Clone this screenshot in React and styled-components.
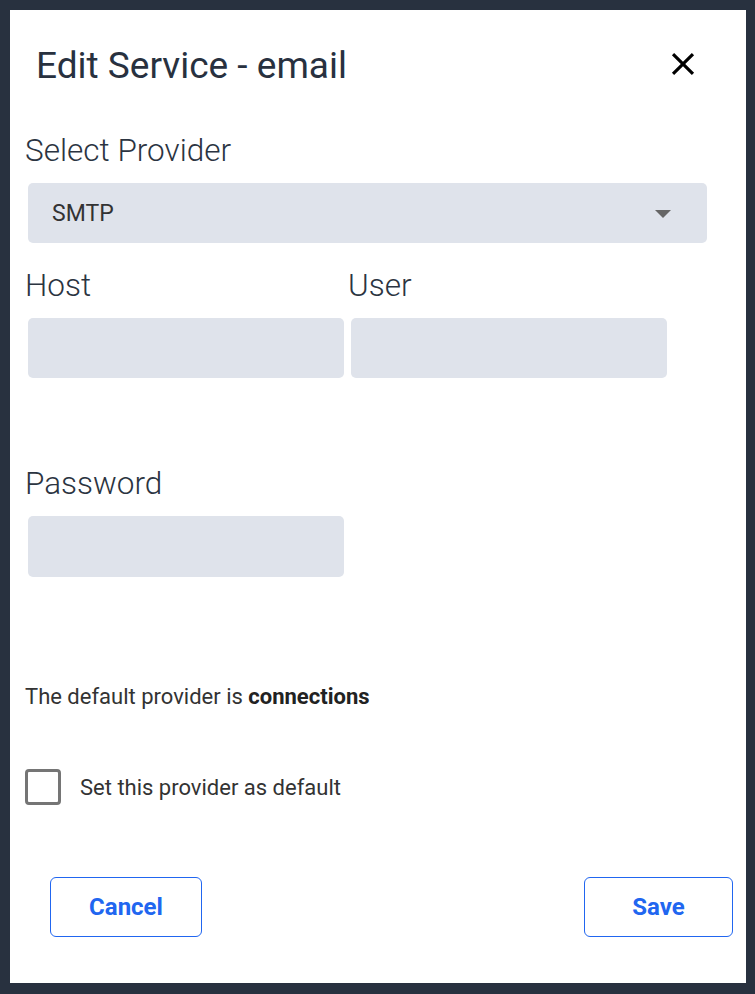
import React, { useState } from "react";
import styled, { createGlobalStyle } from "styled-components";
import { MdClose } from "react-icons/md";

const GlobalStyle = createGlobalStyle`
  html, body {
    margin: 0;
    padding: 0;
    background: #28313f;
  }
  body {
    font-family: Roboto, "Liberation Sans", sans-serif;
  }
`;

const Screen = styled.div`
  padding: 10px 9px 11px 10px;
`;

const Dialog = styled.div`
  box-sizing: border-box;
  width: 736px;
  height: 973px;
  background: #fff;
  padding: 0 0 0 15px;
  display: flex;
  flex-direction: column;
`;

const Header = styled.div`
  display: flex;
  align-items: flex-start;
  justify-content: space-between;
  padding: 35px 0 0 11px;
`;

const Title = styled.h2`
  margin: 0;
  font-size: 37px;
  line-height: 42px;
  font-weight: 400;
  color: #28313f;
`;

const CloseBtn = styled.button`
  border: none;
  background: transparent;
  padding: 0;
  margin: 0 44px 0 0;
  width: 38px;
  height: 38px;
  display: flex;
  color: #000;
  cursor: pointer;
`;

const Label = styled.label`
  display: block;
  font-size: 31.5px;
  line-height: 36px;
  font-weight: 300;
  color: #2b3441;
  margin: ${(p) => p.$top || 0}px 0 14px 0;
`;

const Field = styled.div`
  box-sizing: border-box;
  height: ${(p) => p.$height ?? 60}px;
  width: ${(p) => p.$width}px;
  margin-left: 3px;
  background: #dfe3eb;
  border-radius: 5px;
`;

const SelectBox = styled(Field)`
  display: flex;
  align-items: center;
  justify-content: space-between;
  padding: 0 36px 0 24px;
  font-size: 23px;
  color: #333;
`;

const Caret = styled.span`
  width: 0;
  height: 0;
  border-left: 8px solid transparent;
  border-right: 8px solid transparent;
  border-top: 8px solid #666;
  margin-top: 2px;
`;

const Row = styled.div`
  display: flex;
`;

const Col = styled.div`
  display: flex;
  flex-direction: column;
  width: ${(p) => p.$width}px;
`;

const Note = styled.p`
  margin: 107px 0 0 0;
  font-size: 22px;
  line-height: 26px;
  color: #333;
  b {
    font-weight: 700;
    color: #222;
  }
`;

const CheckRow = styled.label`
  display: flex;
  align-items: center;
  gap: 19px;
  margin-top: 59px;
  font-size: 22px;
  color: #333;
  cursor: pointer;
`;

const Box = styled.span`
  box-sizing: border-box;
  width: 36px;
  height: 36px;
  border: 3px solid #757575;
  border-radius: 4px;
  background: ${(p) => (p.$checked ? "#757575" : "#fff")};
`;

const Footer = styled.div`
  display: flex;
  justify-content: space-between;
  margin: 72px 13px 0 25px;
`;

const Button = styled.button`
  box-sizing: border-box;
  width: ${(p) => p.$width}px;
  height: 60px;
  background: #fff;
  border: 1px solid #2166f0;
  border-radius: 6px;
  color: #2166f0;
  font-family: Roboto, "Liberation Sans", sans-serif;
  font-weight: 700;
  font-size: 24px;
  cursor: pointer;
`;

export default function App() {
  const [isDefault, setIsDefault] = useState(false);
  return (
    <Screen>
      <GlobalStyle />
      <Dialog>
        <Header>
          <Title>Edit Service - email</Title>
          <CloseBtn aria-label="close">
            <MdClose size={38} />
          </CloseBtn>
        </Header>

        <Label $top={46}>Select Provider</Label>
        <SelectBox $width={679}>
          <span>SMTP</span>
          <Caret />
        </SelectBox>

        <Row>
          <Col $width={323}>
            <Label $top={25}>Host</Label>
            <Field $width={316} />
          </Col>
          <Col $width={323}>
            <Label $top={25}>User</Label>
            <Field $width={316} />
          </Col>
        </Row>

        <Label $top={88}>Password</Label>
        <Field $width={316} $height={61} />

        <Note>
          The default provider is <b>connections</b>
        </Note>

        <CheckRow onClick={() => setIsDefault(!isDefault)}>
          <Box $checked={isDefault} />
          Set this provider as default
        </CheckRow>

        <Footer>
          <Button $width={152}>Cancel</Button>
          <Button $width={149}>Save</Button>
        </Footer>
      </Dialog>
    </Screen>
  );
}
